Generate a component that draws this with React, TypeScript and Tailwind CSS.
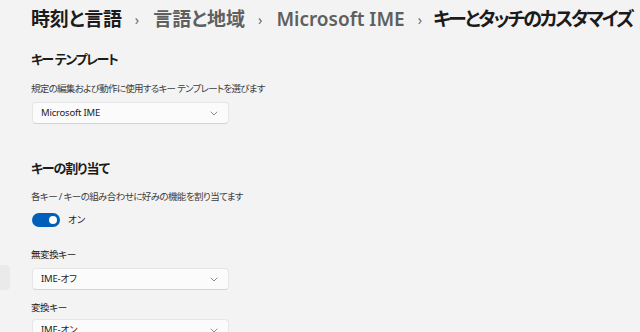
import React from "react";

const font = "font-['Noto_Sans','Noto_Sans_CJK_JP',sans-serif] [font-feature-settings:'palt']";

const Chevron = () => (
  <svg width="8" height="5" viewBox="0 0 8 5" className="text-[#8a8a8a]">
    <path d="M1 1l3 3 3-3" fill="none" stroke="currentColor" strokeWidth="1" strokeLinecap="round" strokeLinejoin="round" />
  </svg>
);

const Select = ({ value, className = "" }: { value: string; className?: string }) => (
  <div
    className={`w-[197px] h-[22px] flex items-center justify-between pl-[8px] pr-[10px] bg-[#fbfbfb] border border-[#e6e6e6] border-b-[#d4d4d4] rounded-[4px] text-[9.5px] tracking-[-0.2px] text-[#1b1b1b] ${className}`}
  >
    <span>{value}</span>
    <Chevron />
  </div>
);

const Sep = () => <span className="text-[#6b6b6b] text-[14px] font-normal mx-[13px]">›</span>;

export default function App() {
  return (
    <div className={`w-[640px] h-[332px] overflow-hidden bg-[#f3f3f3] flex ${font}`}>
      <aside className="w-[10px] shrink-0">
        <div className="mt-[265px] h-[25px] bg-[#eaeaea] rounded-r-[4px]" />
      </aside>
      <main className="flex-1 pl-[21px] text-[#1b1b1b]">
        <div className="h-[38px] flex items-center text-[19px] font-semibold whitespace-nowrap">
          <span className="tracking-[-0.2px]">時刻と言語</span>
          <Sep />
          <span className="text-[#5f5f5f] ml-[1px]">言語と地域</span>
          <Sep />
          <span className="text-[#5f5f5f] ml-[1px]">Microsoft IME</span>
          <Sep />
          <span className="-ml-[2px] tracking-[-2.1px]">キーとタッチのカスタマイズ</span>
        </div>

        <h2 className="mt-[11px] h-[20px] leading-[20px] text-[13px] tracking-[-1.4px] font-semibold">キー テンプレート</h2>
        <p className="mt-[12px] h-[16px] leading-[16px] text-[9.5px] tracking-[-0.7px] text-[#3d3d3d]">
          規定の編集および動作に使用するキー テンプレートを選びます
        </p>
        <Select value="Microsoft IME" className="mt-[5px] ml-[1px]" />

        <h2 className="mt-[34px] h-[20px] leading-[20px] text-[13px] tracking-[-1px] font-semibold">キーの割り当て</h2>
        <p className="mt-[11px] h-[16px] leading-[16px] text-[9.5px] tracking-[-0.6px] text-[#3d3d3d]">
          各キー / キーの組み合わせに好みの機能を割り当てます
        </p>
        <div className="mt-[8px] ml-[1px] h-[14px] flex items-center gap-[8px]">
          <div className="w-[28px] h-[14px] rounded-full bg-[#005fb8] flex items-center justify-end pr-[3px]">
            <div className="w-[8px] h-[8px] rounded-full bg-white" />
          </div>
          <span className="text-[9.5px]">オン</span>
        </div>

        <p className="mt-[20px] h-[16px] leading-[16px] text-[9.5px] tracking-[-0.4px]">無変換キー</p>
        <Select value="IME-オフ" className="mt-[5px] ml-[1px] h-[21px]" />
        <p className="mt-[10px] h-[16px] leading-[16px] text-[9.5px] tracking-[-0.4px]">変換キー</p>
        <Select value="IME-オン" className="mt-[3px] ml-[1px]" />
      </main>
    </div>
  );
}
